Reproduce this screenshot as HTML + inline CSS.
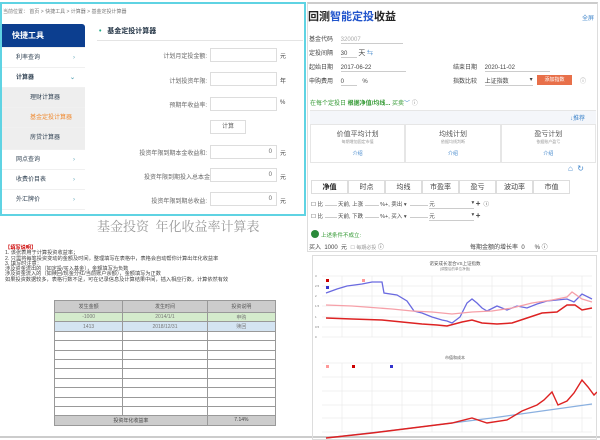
<!DOCTYPE html>
<html><head><meta charset="utf-8"><style>
*{margin:0;padding:0;box-sizing:border-box}
body{width:600px;height:440px;background:#fff;position:relative;overflow:hidden;font-family:"Liberation Sans","Noto Sans CJK SC",sans-serif;color:#555}
.a{position:absolute;white-space:nowrap}
.inp{position:absolute;border:1px solid #ddd;background:#fff;height:14px;width:67px;font-size:6px;text-align:right;padding-right:4px;line-height:12px;color:#666}
.lab{position:absolute;right:393px;font-size:6px;color:#666;white-space:nowrap}
.side div{height:20px;font-size:6px;line-height:20px;padding-left:14px;color:#345;border-bottom:1px solid #f0f0f0;position:relative}
.side .sub{background:#eee;padding-left:28px;color:#345}
.arr{position:absolute;right:10px;color:#6ab}
.f{font-size:6px;color:#444}
.ul{border-bottom:1px solid #ccc}
table{border-collapse:collapse}
td{border:1px solid #999;height:9.4px;font-size:5px;text-align:center;color:#777}
.tab{display:inline-block;width:37px;height:14px;border:1px solid #ddd;font-size:7px;text-align:center;line-height:13px;margin-right:0;color:#444;background:#fff}
</style></head><body>
<!-- left panel -->
<div class="a" style="left:0;top:2px;width:306px;height:214px;border:2px solid #5fd3e3"></div>
<div class="a" style="left:3px;top:8px;font-size:5px;color:#777">当前位置： 首页 &gt; 快捷工具 &gt; 计算器 &gt; 基金定投计算器</div>
<div class="a side" style="left:2px;top:24px;width:83px">
<div style="background:#0c3e8f;color:#fff;font-weight:bold;font-size:8px;height:24px;line-height:24px;padding-left:10px;border-radius:0 3px 0 0">快捷工具</div>
<div>利率查询<span class="arr">›</span></div>
<div style="font-weight:bold">计算器<span class="arr">⌄</span></div>
<div class="sub">理财计算器</div>
<div class="sub" style="color:#f08a30">基金定投计算器</div>
<div class="sub" style="height:22px">房贷计算器</div>
<div>网点查询<span class="arr">›</span></div>
<div>收费价目表<span class="arr">›</span></div>
<div>外汇牌价<span class="arr">›</span></div>
</div>
<div class="a" style="left:99px;top:26px;font-size:7px;font-weight:bold;color:#234"><span style="color:#2a8">•</span>&nbsp;&nbsp; 基金定投计算器</div>
<div class="a" style="left:97px;top:40px;width:206px;border-top:1px solid #e4e4e4"></div>
<div class="lab" style="top:51px">计划月定投金额:</div><div class="inp" style="left:210px;top:48px"></div><div class="a f" style="left:280px;top:51px">元</div>
<div class="lab" style="top:76px">计划投资年限:</div><div class="inp" style="left:210px;top:72px"></div><div class="a f" style="left:280px;top:76px">年</div>
<div class="lab" style="top:100px">预期年收益率:</div><div class="inp" style="left:210px;top:97px"></div><div class="a f" style="left:280px;top:100px">%</div>
<div class="inp" style="left:210px;top:120px;width:36px;height:14px;text-align:center;padding:0">计算</div>
<div class="lab" style="top:148px">投资年限到期本金收益和:</div><div class="inp" style="left:210px;top:145px">0</div><div class="a f" style="left:280px;top:148px">元</div>
<div class="lab" style="top:172px;right:390px">投资年限到期投入总本金</div><div class="inp" style="left:210px;top:168px">0</div><div class="a f" style="left:280px;top:172px">元</div>
<div class="lab" style="top:196px">投资年限到期总收益:</div><div class="inp" style="left:210px;top:192px">0</div><div class="a f" style="left:280px;top:196px">元</div>
<!-- bottom left -->
<div class="a" style="left:97px;top:216px;font-family:'Liberation Serif','Noto Serif CJK SC',serif;font-size:13px;color:#999">基金投资&nbsp; 年化收益率计算表</div>
<div class="a" style="left:5px;top:246px;font-size:5.2px;line-height:5.3px;color:#444">
<span style="color:#c00;font-weight:bold">【填写说明】</span><br>1. 该张表用于计算投资收益率；<br>2. 只需将每笔投资变动的金额及时间，整理填写在表格中，表格会自动帮你计算出年化收益率<br>3. 填写时注意：<br>涉及资金流出的（如定投/买入基金），金额填写为负数<br>涉及资金流入的（如赎回/现金分红/当前账户余额），金额填写为正数<br>如果投资数据较多，表格行数不足，可在记录信息及计算结果中间，插入相应行数，计算依然有效</div>
<table class="a" style="left:54px;top:300px;width:222px;border:1.5px solid #888">
<tr><td style="background:#ccc;height:12px;color:#555">发生金额</td><td style="background:#ccc;color:#555">发生时间</td><td style="background:#ccc;color:#555">投资说明</td></tr>
<tr style="background:#d4ebcc"><td>-1000</td><td>2014/1/1</td><td>申购</td></tr>
<tr style="background:#d4e4f2"><td>1413</td><td>2018/12/31</td><td>赎回</td></tr>
<tr><td></td><td></td><td></td></tr><tr><td></td><td></td><td></td></tr><tr><td></td><td></td><td></td></tr><tr><td></td><td></td><td></td></tr><tr><td></td><td></td><td></td></tr><tr><td></td><td></td><td></td></tr><tr><td></td><td></td><td></td></tr><tr><td></td><td></td><td></td></tr><tr><td></td><td></td><td></td></tr>
<tr style="background:#ccc"><td colspan="2" style="color:#444">投资年化收益率</td><td style="color:#444">7.14%</td></tr>
</table>
<div class="a" style="left:0;top:436px;width:600px;border-top:2px solid #ccc"></div>
<!-- right panel -->
<div class="a" style="left:307px;top:2px;width:291px;height:250px;border:1px solid #ddd;border-top:2px solid #ccc"></div>
<div class="a" style="left:308px;top:8px;font-size:11px;font-weight:bold;color:#222">回测<span style="color:#2255cc">智能定投</span>收益</div>
<div class="a" style="left:582px;top:13px;font-size:6px;color:#48c">全屏</div>
<div class="a f" style="left:309px;top:34px">基金代码 <span class="ul" style="display:inline-block;width:62px;margin-left:6px;color:#aaa">320007</span></div>
<div class="a f" style="left:309px;top:48px">定投间隔 <span class="ul" style="display:inline-block;width:16px;margin-left:6px">30</span> <span style="font-size:7px">天</span> <span style="color:#48c">⇆</span></div>
<div class="a f" style="left:309px;top:62px">起始日期 <span class="ul" style="display:inline-block;width:65px;margin-left:6px">2017-06-22</span></div>
<div class="a f" style="left:453px;top:62px">结束日期 <span class="ul" style="display:inline-block;width:65px;margin-left:6px">2020-11-02</span></div>
<div class="a f" style="left:309px;top:76px">申购费用 <span class="ul" style="display:inline-block;width:16px;margin-left:6px">0</span> <span style="margin-left:4px">%</span></div>
<div class="a f" style="left:453px;top:76px">指数比较 <span class="ul" style="display:inline-block;width:48px;margin-left:6px">上证指数 <span style="float:right">▾</span></span></div>
<div class="a" style="left:537px;top:75px;width:35px;height:10px;background:#e8704a;color:#fff;font-size:5px;text-align:center;line-height:10px">添加指数</div>
<div class="a f" style="left:580px;top:76px;color:#888">ⓘ</div>
<div class="a" style="left:310px;top:98px;font-size:6px;color:#393">在每个定投日 <b style="color:#393">根据净值/均线...</b> 买卖<span style="color:#48c">﹀</span> <span style="color:#888">ⓘ</span></div>
<div class="a" style="left:310px;top:110px;width:286px;height:53px;background:#f4f6fa;border-top:1px solid #e6e6e6;border-bottom:1px solid #e6e6e6"></div>
<div class="a" style="left:570px;top:113px;font-size:6px;color:#48c">↓推荐</div>
<div class="a" style="left:310px;top:124px;width:286px;height:39px;display:flex;background:#fff">
<div style="flex:1;border:1px solid #e6e6e6;text-align:center;font-size:7px;color:#555;padding-top:4px">价值平均计划<div style="font-size:4px;color:#999">每期增加固定市值</div><div style="font-size:5px;color:#48c;margin-top:5px">介绍</div></div>
<div style="flex:1;border:1px solid #e6e6e6;text-align:center;font-size:7px;color:#555;padding-top:4px">均线计划<div style="font-size:4px;color:#999">依据均线判断</div><div style="font-size:5px;color:#48c;margin-top:5px">介绍</div></div>
<div style="flex:1;border:1px solid #e6e6e6;text-align:center;font-size:7px;color:#555;padding-top:4px">盈亏计划<div style="font-size:4px;color:#999">依据账户盈亏</div><div style="font-size:5px;color:#48c;margin-top:5px">介绍</div></div></div>
<div class="a" style="left:568px;top:164px;font-size:8px;color:#48c">⌂&nbsp; ↻</div>
<div class="a" style="left:311px;top:180px;font-size:0"><span class="tab" style="font-weight:bold;color:#222">净值</span><span class="tab">时点</span><span class="tab">均线</span><span class="tab">市盈率</span><span class="tab">盈亏</span><span class="tab">波动率</span><span class="tab">市值</span></div>
<div class="a f" style="left:311px;top:199px;font-size:5.5px">☐ 比 <span class="ul" style="display:inline-block;width:12px"></span> 天前, 上涨 <span class="ul" style="display:inline-block;width:14px"></span> %+, 卖出 ▾ &nbsp;<span class="ul" style="display:inline-block;width:18px"></span> <span class="ul" style="display:inline-block;width:45px">元 <span style="float:right">▾</span></span> <b style="font-size:8px">+</b> &nbsp;ⓘ</div>
<div class="a f" style="left:311px;top:211px;font-size:5.5px">☐ 比 <span class="ul" style="display:inline-block;width:12px"></span> 天前, 下跌 <span class="ul" style="display:inline-block;width:14px"></span> %+, 买入 ▾ &nbsp;<span class="ul" style="display:inline-block;width:18px"></span> <span class="ul" style="display:inline-block;width:45px">元 <span style="float:right">▾</span></span> <b style="font-size:8px">+</b></div>
<div class="a" style="left:311px;top:230px;width:8px;height:8px;border-radius:50%;background:#2a8a3a"></div>
<div class="a" style="left:321px;top:231px;font-size:5.5px;color:#393">上述条件不成立:</div>
<div class="a f" style="left:309px;top:242px;font-size:6px">买入 &nbsp;1000 &nbsp;元 &nbsp;<span style="color:#999;font-size:5px">☐ 每期必投</span> ⓘ</div>
<div class="a f" style="left:470px;top:242px;font-size:6px">每期金额的增长率 &nbsp;0 &nbsp;&nbsp;&nbsp;&nbsp;&nbsp;% ⓘ</div>
<!-- chart -->
<div class="a" style="left:312px;top:255px;width:285px;height:185px;border:1px solid #ddd"></div>
<svg class="a" style="left:312px;top:255px" width="285" height="185" viewBox="0 0 285 185">
<text x="143" y="10" font-size="4.5" text-anchor="middle" fill="#555">诺安成长混合VS上证指数</text>
<text x="143" y="15" font-size="3.5" text-anchor="middle" fill="#888">(调整后的单位净值)</text>
<g stroke="#e6e6e6" stroke-width="0.6">
<line x1="10" y1="21" x2="280" y2="21"/><line x1="10" y1="31" x2="280" y2="31"/><line x1="10" y1="41" x2="280" y2="41"/><line x1="10" y1="51" x2="280" y2="51"/><line x1="10" y1="62" x2="280" y2="62"/><line x1="10" y1="72" x2="280" y2="72"/><line x1="10" y1="82" x2="280" y2="82"/>
<line x1="10" y1="108" x2="280" y2="108"/><line x1="10" y1="122" x2="280" y2="122"/><line x1="10" y1="136" x2="280" y2="136"/><line x1="10" y1="150" x2="280" y2="150"/><line x1="10" y1="163" x2="280" y2="163"/><line x1="10" y1="177" x2="280" y2="177"/>
<line x1="30" y1="21" x2="30" y2="82"/><line x1="60" y1="21" x2="60" y2="82"/><line x1="90" y1="21" x2="90" y2="82"/><line x1="120" y1="21" x2="120" y2="82"/><line x1="150" y1="21" x2="150" y2="82"/><line x1="180" y1="21" x2="180" y2="82"/><line x1="210" y1="21" x2="210" y2="82"/><line x1="240" y1="21" x2="240" y2="82"/><line x1="270" y1="21" x2="270" y2="82"/>
<line x1="30" y1="108" x2="30" y2="177"/><line x1="60" y1="108" x2="60" y2="177"/><line x1="90" y1="108" x2="90" y2="177"/><line x1="120" y1="108" x2="120" y2="177"/><line x1="150" y1="108" x2="150" y2="177"/><line x1="180" y1="108" x2="180" y2="177"/><line x1="210" y1="108" x2="210" y2="177"/><line x1="240" y1="108" x2="240" y2="177"/><line x1="270" y1="108" x2="270" y2="177"/>
</g>
<g font-size="3" fill="#777"><text x="3" y="22">3</text><text x="3" y="32">2.5</text><text x="3" y="42">2</text><text x="3" y="52">1.5</text><text x="3" y="63">1</text><text x="3" y="73">0.5</text><text x="3" y="83">0</text></g>
<rect x="14" y="24" width="3" height="3" fill="#c00"/><rect x="50" y="24" width="3" height="3" fill="#f99"/><rect x="14" y="31" width="3" height="3" fill="#33c"/>
<polyline fill="none" stroke="#6a6ae0" stroke-width="1.3" points="14,38 25,34 35,31 50,29 60,27 70,27 72,38 85,40 95,46 102,56 110,58 120,62 130,65 135,66 140,68 148,62 155,48 160,44 165,48 170,53 175,56 185,51 195,55 205,51 215,53 225,49 235,46 245,45 255,44 262,47 270,39 280,44"/>
<polyline fill="none" stroke="#f6a0a8" stroke-width="1.3" points="14,50 40,51 80,54 100,56 120,57 140,59 160,57 180,56 200,53 220,48 240,45 255,42 260,37 270,44 280,47"/>
<polyline fill="none" stroke="#d22" stroke-width="1.5" points="14,63 40,64 70,65 90,67 110,69 125,70 135,71 150,67 160,65 170,68 185,69 200,68 215,63 230,58 245,57 255,50 263,50 270,55 280,53"/>
<text x="143" y="104" font-size="4" text-anchor="middle" fill="#555">市值和成本</text>
<rect x="14" y="110" width="3" height="3" fill="#f99"/><rect x="40" y="110" width="3" height="3" fill="#c00"/><rect x="78" y="110" width="3" height="3" fill="#33c"/>
<polyline fill="none" stroke="#8ab0e0" stroke-width="1.2" points="14,183 100,173 180,163 280,149"/>
<polyline fill="none" stroke="#d22" stroke-width="1.4" points="14,183 60,178 100,173 140,168 160,163 175,168 195,165 210,156 225,150 232,145 240,137 246,150 255,146 262,138 270,125 276,132 282,140 285,137"/>
</svg>
</body></html>
